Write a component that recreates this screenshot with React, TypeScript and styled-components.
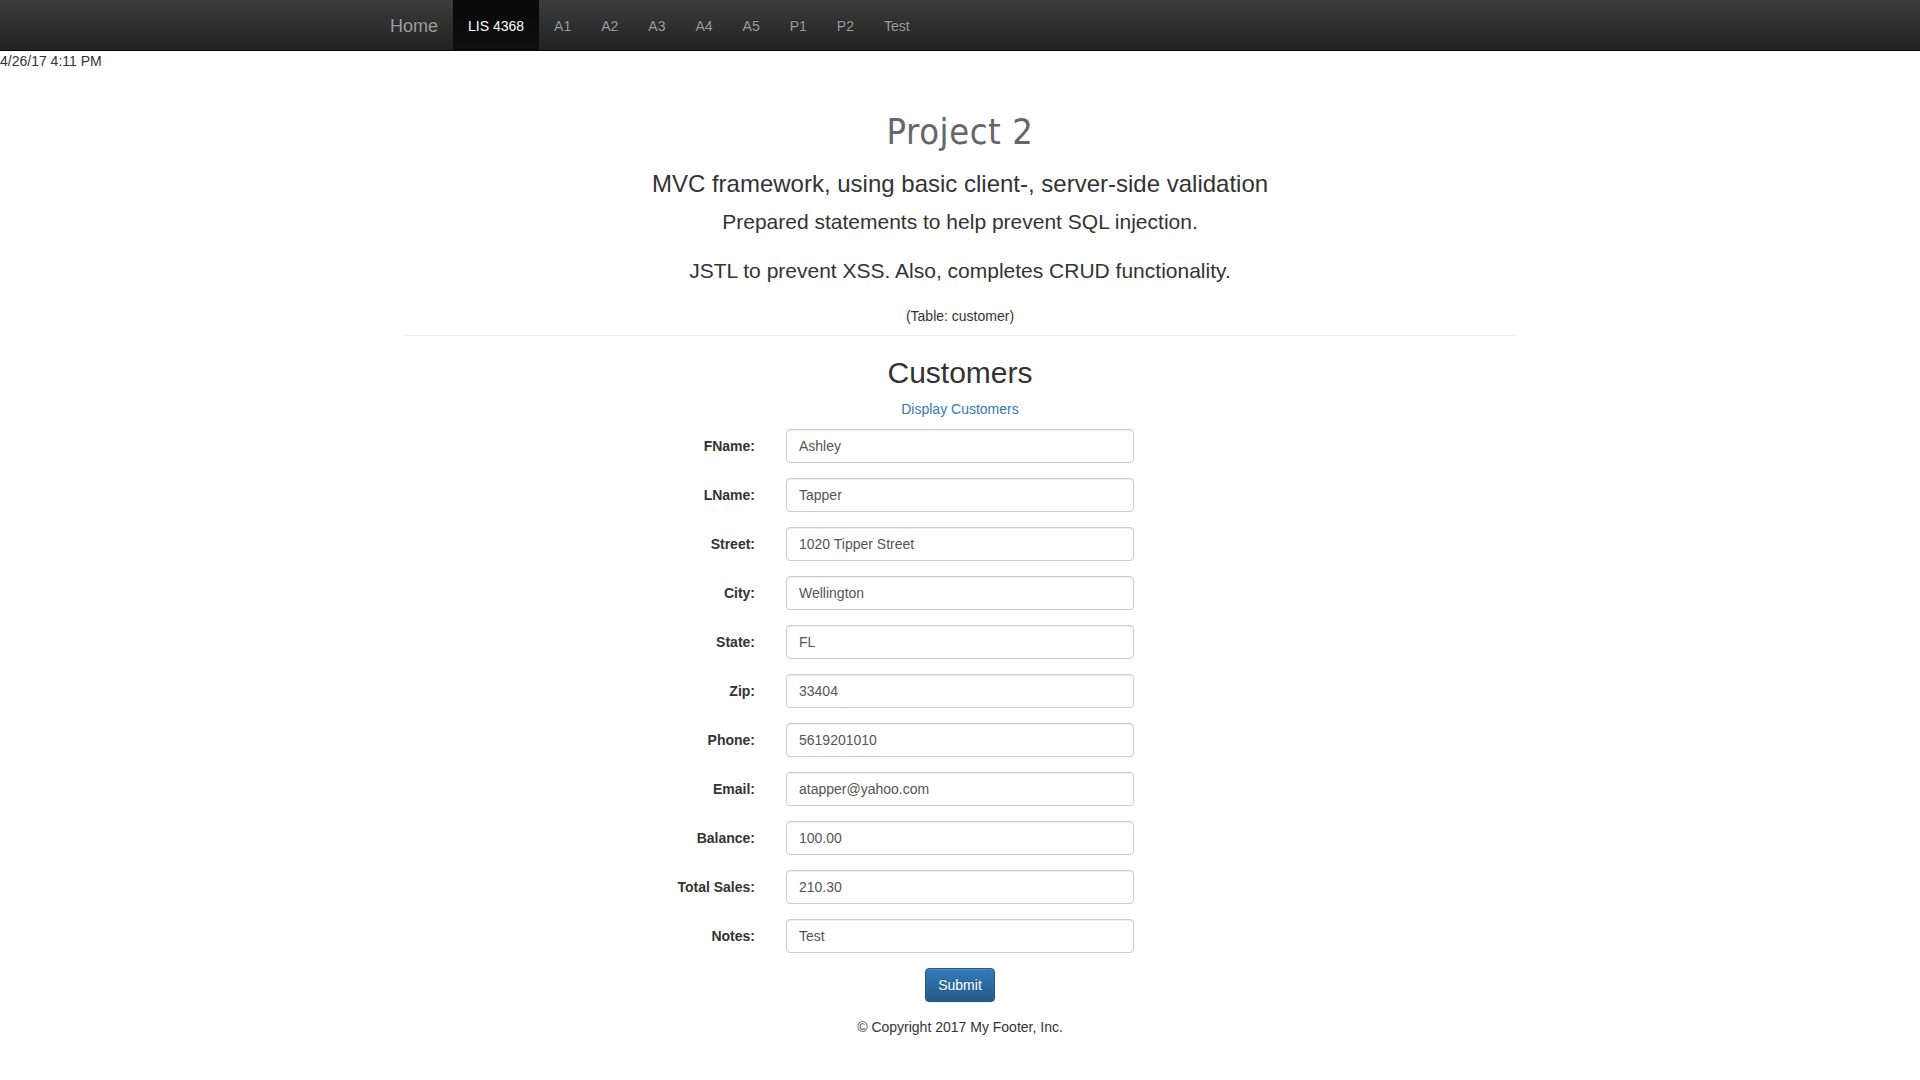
import React from "react";
import styled, { createGlobalStyle } from "styled-components";

const GlobalStyle = createGlobalStyle`
  html, body {
    margin: 0;
    padding: 0;
    background: #fff;
  }
  body {
    font-family: "Liberation Sans", Arial, Helvetica, sans-serif;
    font-size: 14px;
    line-height: 20px;
    color: #333;
  }
  * { box-sizing: border-box; }
`;

const Navbar = styled.nav`
  height: 51px;
  background-image: linear-gradient(to bottom, #3c3c3c 0, #222 100%);
  border-bottom: 1px solid #080808;
`;

const NavContainer = styled.div`
  width: 1170px;
  margin: 0 auto;
  display: flex;
  align-items: stretch;
  height: 50px;
`;

const Brand = styled.a`
  display: block;
  padding: 16px 15px 14px;
  font-size: 18px;
  line-height: 20px;
  color: #9d9d9d;
  text-decoration: none;
  text-shadow: 0 -1px 0 rgba(0, 0, 0, 0.25);
`;

const NavList = styled.ul`
  display: flex;
  list-style: none;
  margin: 0;
  padding: 0;
`;

const NavLink = styled.a<{ $active?: boolean }>`
  display: block;
  height: 50px;
  padding: 16px 15px 14px;
  font-size: 14px;
  line-height: 20px;
  text-decoration: none;
  color: ${(p) => (p.$active ? "#fff" : "#9d9d9d")};
  background-image: ${(p) =>
    p.$active ? "linear-gradient(to bottom, #080808 0, #0f0f0f 100%)" : "none"};
  text-shadow: 0 -1px 0 rgba(0, 0, 0, 0.25);
`;

const DateLine = styled.p`
  margin: 0;
  font-size: 14px;
  line-height: 20px;
  color: #333;
`;

const Main = styled.main`
  width: 1110px;
  margin: 0 auto;
  text-align: center;
`;

const Title = styled.h1`
  margin: 41px 0 0;
  font-family: "DejaVu Sans Condensed", "DejaVu Sans", sans-serif;
  font-weight: normal;
  font-size: 36px;
  letter-spacing: 0.6px;
  line-height: 39.6px;
  color: #666;
`;

const Subtitle = styled.h3`
  margin: 19px 0 10px;
  font-size: 24px;
  font-weight: normal;
  line-height: 26.4px;
  color: #333;
`;

const Lead = styled.p`
  margin: 0 0 20px;
  font-size: 21px;
  line-height: 29.4px;
  font-weight: 300;
  color: #333;
`;

const Note = styled.p`
  margin: 0;
  font-size: 14px;
  line-height: 20px;
`;

const Divider = styled.hr`
  margin: 9px 0 20px;
  border: 0;
  border-top: 1px solid #eee;
  height: 0;
`;

const SectionTitle = styled.h2`
  margin: 0 0 10px;
  font-size: 30px;
  line-height: 33px;
  font-weight: normal;
  color: #333;
`;

const LinkLine = styled.p`
  margin: 0 0 10px;
  font-size: 14px;
  line-height: 20px;
`;

const TextLink = styled.a`
  color: #337ab7;
  text-decoration: none;
`;

const Form = styled.form`
  margin: 0;
`;

const FormRow = styled.div`
  display: grid;
  grid-template-columns: 1fr 348px 1fr;
  column-gap: 31px;
  align-items: center;
  margin-bottom: 15px;
`;

const Label = styled.label`
  grid-column: 1;
  text-align: right;
  font-weight: bold;
  font-size: 14px;
  line-height: 20px;
  color: #333;
`;

const Input = styled.input`
  grid-column: 2;
  display: block;
  width: 348px;
  height: 34px;
  padding: 6px 12px;
  font-family: "Liberation Sans", Arial, Helvetica, sans-serif;
  font-size: 14px;
  line-height: 20px;
  color: #555;
  background: #fff;
  border: 1px solid #ccc;
  border-radius: 4px;
  box-shadow: inset 0 1px 1px rgba(0, 0, 0, 0.075);
  outline: none;
`;

const ButtonRow = styled.div`
  display: flex;
  justify-content: center;
  margin-bottom: 15px;
`;

const SubmitButton = styled.button`
  height: 34px;
  padding: 6px 12px;
  font-family: "Liberation Sans", Arial, Helvetica, sans-serif;
  font-size: 14px;
  line-height: 20px;
  color: #fff;
  background-image: linear-gradient(to bottom, #337ab7 0, #265a88 100%);
  border: 1px solid #245580;
  border-radius: 4px;
  text-shadow: 0 -1px 0 rgba(0, 0, 0, 0.2);
  box-shadow: inset 0 1px 0 rgba(255, 255, 255, 0.15), 0 1px 1px rgba(0, 0, 0, 0.075);
  cursor: pointer;
`;

const Footer = styled.footer`
  font-size: 14px;
  line-height: 20px;
  color: #333;
  text-align: center;
`;

const navItems = ["LIS 4368", "A1", "A2", "A3", "A4", "A5", "P1", "P2", "Test"];

const fields: { label: string; value: string }[] = [
  { label: "FName:", value: "Ashley" },
  { label: "LName:", value: "Tapper" },
  { label: "Street:", value: "1020 Tipper Street" },
  { label: "City:", value: "Wellington" },
  { label: "State:", value: "FL" },
  { label: "Zip:", value: "33404" },
  { label: "Phone:", value: "5619201010" },
  { label: "Email:", value: "atapper@yahoo.com" },
  { label: "Balance:", value: "100.00" },
  { label: "Total Sales:", value: "210.30" },
  { label: "Notes:", value: "Test" },
];

export default function App() {
  return (
    <>
      <GlobalStyle />
      <Navbar>
        <NavContainer>
          <Brand href="#">Home</Brand>
          <NavList>
            {navItems.map((item, i) => (
              <li key={item}>
                <NavLink href="#" $active={i === 0}>
                  {item}
                </NavLink>
              </li>
            ))}
          </NavList>
        </NavContainer>
      </Navbar>
      <DateLine>4/26/17 4:11 PM</DateLine>
      <Main>
        <Title>Project 2</Title>
        <Subtitle>MVC framework, using basic client-, server-side validation</Subtitle>
        <Lead>Prepared statements to help prevent SQL injection.</Lead>
        <Lead>JSTL to prevent XSS. Also, completes CRUD functionality.</Lead>
        <Note>(Table: customer)</Note>
        <Divider />
        <SectionTitle>Customers</SectionTitle>
        <LinkLine>
          <TextLink href="#">Display Customers</TextLink>
        </LinkLine>
        <Form onSubmit={(e) => e.preventDefault()}>
          {fields.map((f) => (
            <FormRow key={f.label}>
              <Label>{f.label}</Label>
              <Input type="text" defaultValue={f.value} />
            </FormRow>
          ))}
          <ButtonRow>
            <SubmitButton type="submit">Submit</SubmitButton>
          </ButtonRow>
        </Form>
        <Footer>© Copyright 2017 My Footer, Inc.</Footer>
      </Main>
    </>
  );
}
